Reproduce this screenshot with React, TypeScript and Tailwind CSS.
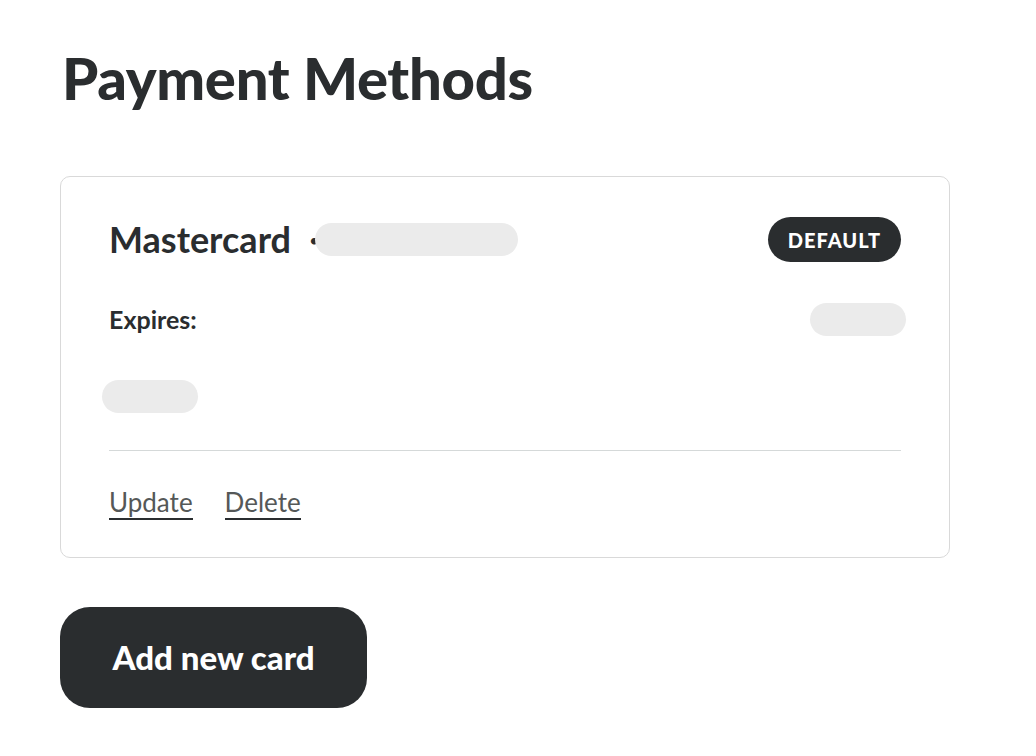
import React from 'react';

const Pill: React.FC<{ className?: string }> = ({ className = '' }) => (
  <span className={`block rounded-full bg-[#ebebeb] ${className}`} />
);

const App: React.FC = () => {
  return (
    <div className="min-h-screen bg-white text-[#2a2d2f] font-['Lato','Liberation_Sans',sans-serif]">
      <div className="pl-[60px] pt-[40px] w-[950px]">
        <h1 className="text-[58px] font-black leading-[76px] tracking-[-0.3px] ml-[2px]">Payment Methods</h1>

        <div className="mt-[60px] border-[1.5px] border-[#d9d9d9] rounded-[10px] px-[48px] pt-[40px] pb-[37px]">
          <div className="flex items-center justify-between">
            <div className="flex items-center">
              <span className="text-[36px] font-bold leading-[45px]">Mastercard</span>
              <span className="ml-[18px] text-[18px] leading-none text-[#2a2d2f]">•</span>
              <Pill className="w-[203px] h-[33px] -ml-[4px]" />
            </div>
            <span className="rounded-full bg-[#2a2d2f] text-white text-[20px] font-black tracking-[1px] h-[45px] px-[20px] flex items-center">
              DEFAULT
            </span>
          </div>

          <div className="flex items-center justify-between mt-[41px]">
            <span className="text-[25px] font-bold leading-[30px] -mt-[1px]">Expires:</span>
            <Pill className="w-[96px] h-[33px] mr-[-5px]" />
          </div>

          <Pill className="w-[96px] h-[33px] mt-[44px] -ml-[7px]" />

          <div className="mt-[37px] border-t-[1.5px] border-[#d5d9d9]" />

          <div className="flex gap-[32px] mt-[36px]">
            <a className="text-[26px] text-[#555858] leading-[30px] border-b-2 border-[#2a2d2f] pb-[1px] cursor-pointer">Update</a>
            <a className="text-[26px] text-[#555858] leading-[30px] border-b-2 border-[#2a2d2f] pb-[1px] cursor-pointer">Delete</a>
          </div>
        </div>

        <button className="mt-[49px] w-[307px] h-[101px] rounded-[30px] bg-[#2a2d2f] text-white text-[33px] font-black">
          Add new card
        </button>
      </div>
    </div>
  );
};

export default App;
